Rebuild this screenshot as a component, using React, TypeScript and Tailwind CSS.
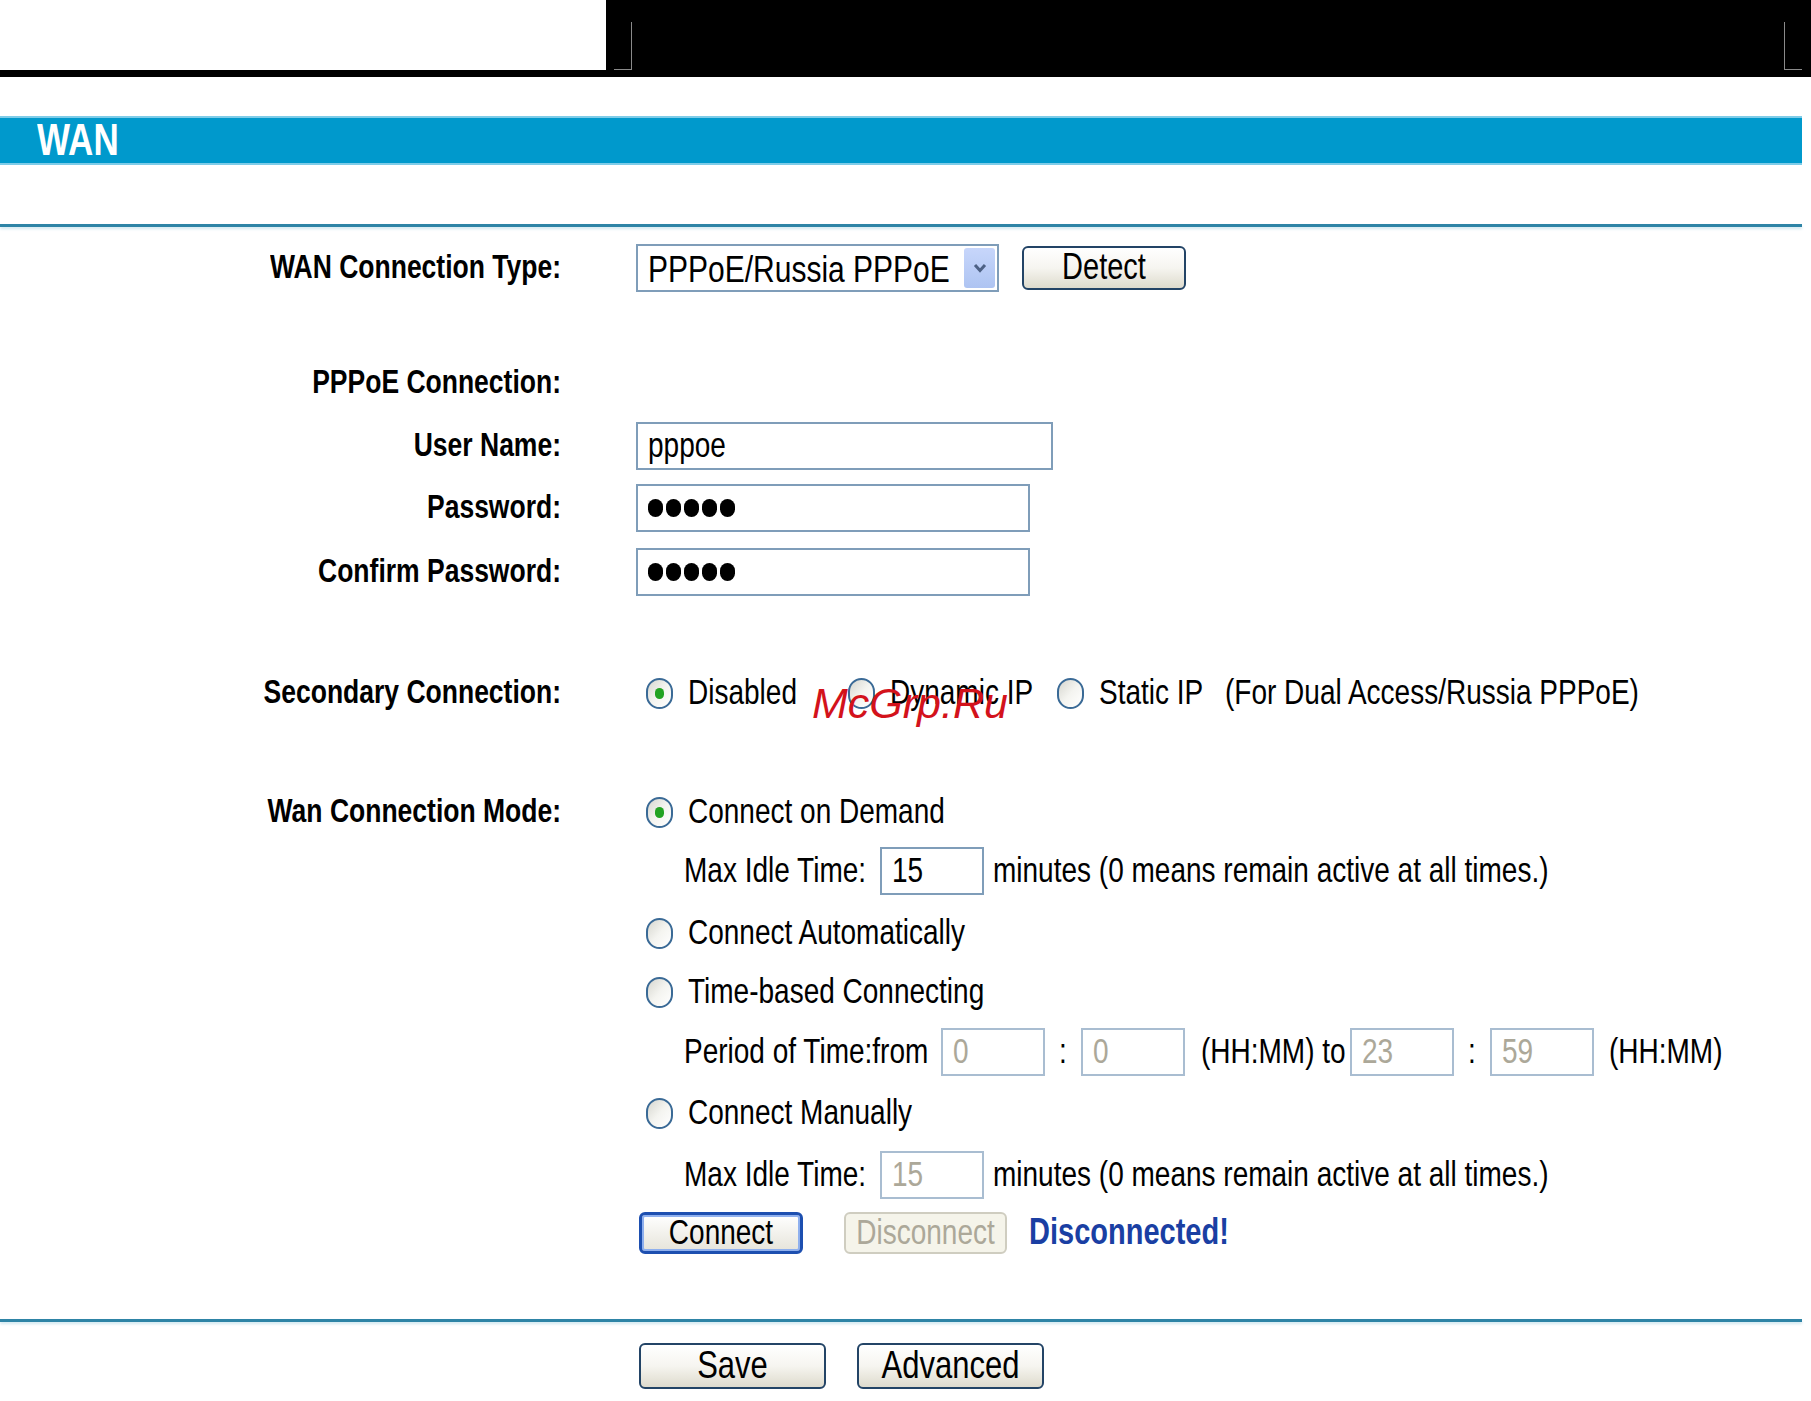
import React from "react";

const font = "font-['Liberation_Sans',Arial,sans-serif]";

function T({ children, className = "" }: { children: React.ReactNode; className?: string }) {
  return <span className={`inline-block scale-y-125 whitespace-nowrap ${className}`}>{children}</span>;
}

function Label({ children }: { children?: React.ReactNode }) {
  return (
    <div className="w-[561px] shrink-0 text-right text-[26.5px] font-bold text-black">
      {children ? <T>{children}</T> : null}
    </div>
  );
}

function Row({ label, className, children }: { label?: string; className: string; children?: React.ReactNode }) {
  return (
    <div className={`flex h-[48px] items-center ${className}`}>
      <Label>{label}</Label>
      <div className="ml-[75px] flex items-center text-[28px] text-black">{children}</div>
    </div>
  );
}

function Radio({ checked = false }: { checked?: boolean }) {
  return (
    <span className="flex h-[31px] w-[27px] shrink-0 items-center justify-center rounded-full border-2 border-[#3a6a96] bg-gradient-to-br from-[#d6d6cf] via-[#f4f4f0] to-white">
      {checked && <span className="h-[11px] w-[9px] rounded-full bg-[#22a322]" />}
    </span>
  );
}

function Field({ w, value, disabled = false }: { w: string; value?: string; disabled?: boolean }) {
  return (
    <div
      className={`flex h-[48px] ${w} shrink-0 items-center border-2 bg-white pl-[10px] ${
        disabled ? "border-[#a9bdd1] text-[#aca899]" : "border-[#7f9db9] text-black"
      }`}
    >
      {value && <T>{value}</T>}
    </div>
  );
}

function Dots() {
  return (
    <div className="flex h-[48px] w-[394px] items-center gap-[3px] border-2 border-[#7f9db9] bg-white pl-[10px]">
      {[0, 1, 2, 3, 4].map((i) => (
        <span key={i} className="h-[18px] w-[15px] rounded-full bg-black" />
      ))}
    </div>
  );
}

function Button({ children, className, variant = "normal" }: { children: React.ReactNode; className: string; variant?: "normal" | "focus" | "disabled" }) {
  const look =
    variant === "focus"
      ? "border-[3px] border-[#1d4fb0] bg-gradient-to-b from-white to-[#e6e4da] text-black shadow-[inset_0_0_0_2px_#8fb0ee]"
      : variant === "disabled"
      ? "border-2 border-[#cfcdc0] bg-[#f5f4ea] text-[#aca899]"
      : "border-2 border-[#234466] bg-gradient-to-b from-white via-[#f6f5f0] to-[#dedbcd] text-black";
  return (
    <div className={`flex shrink-0 items-center justify-center rounded-[6px] ${look} ${className}`}>
      <T>{children}</T>
    </div>
  );
}

function RadioText({ checked, children }: { checked?: boolean; children: React.ReactNode }) {
  return (
    <div className="ml-[10px] flex items-center gap-[15px]">
      <Radio checked={checked} />
      <T>{children}</T>
    </div>
  );
}

export default function App() {
  return (
    <div className={`relative min-h-[1401px] w-[1811px] bg-white ${font}`}>
      {/* top strip */}
      <div className="relative flex h-[77px] bg-black">
        <div className="h-[70px] w-[606px] bg-white" />
        <span className="absolute left-[631px] top-[22px] h-[48px] w-px bg-[#8a8a8a]" />
        <span className="absolute left-[614px] top-[69px] h-px w-[18px] bg-[#8a8a8a]" />
        <span className="absolute left-[1784px] top-[22px] h-[48px] w-px bg-[#8a8a8a]" />
        <span className="absolute left-[1784px] top-[69px] h-px w-[18px] bg-[#8a8a8a]" />
      </div>

      {/* title bar */}
      <div className="mt-[39px] flex h-[49px] w-[1802px] items-center border-y-2 border-[#7fcce8] bg-[#0099cc] pl-[37px]">
        <T className="text-[35px] font-bold text-white">WAN</T>
      </div>

      <div className="mt-[59px] h-[3px] w-[1802px] bg-[#2e84a6] shadow-[0_2px_3px_#cfe6ef]" />

      <Row label="WAN Connection Type:" className="mt-[17px]">
        <div className="flex h-[48px] w-[363px] items-center border-2 border-[#7f9db9] bg-white pl-[10px] pr-[2px]">
          <T className="text-[30px]">PPPoE/Russia PPPoE</T>
          <div className="ml-auto flex h-[40px] w-[31px] items-center justify-center rounded-[3px] bg-gradient-to-b from-[#c7d6fb] to-[#aec4f2]">
            <svg width="16" height="12" viewBox="0 0 16 12">
              <path d="M3 3 L8 8.5 L13 3" fill="none" stroke="#4d6185" strokeWidth="3" />
            </svg>
          </div>
        </div>
        <Button className="ml-[23px] h-[44px] w-[164px] text-[29px]">Detect</Button>
      </Row>

      <Row label="PPPoE Connection:" className="mt-[67px]" />

      <Row label="User Name:" className="mt-[15px]">
        <Field w="w-[417px]" value="pppoe" />
      </Row>
      <Row label="Password:" className="mt-[14px]">
        <Dots />
      </Row>
      <Row label="Confirm Password:" className="mt-[16px]">
        <Dots />
      </Row>

      <Row label="Secondary Connection:" className="mt-[73px]">
        <div className="w-[202px] shrink-0">
          <RadioText checked>Disabled</RadioText>
        </div>
        <div className="w-[219px] shrink-0">
          <RadioText>Dynamic IP</RadioText>
        </div>
        <div className="-ml-[10px] w-[178px] shrink-0">
          <RadioText>Static IP</RadioText>
        </div>
        <T>(For Dual Access/Russia PPPoE)</T>
      </Row>

      <Row label="Wan Connection Mode:" className="mt-[71px]">
        <RadioText checked>Connect on Demand</RadioText>
      </Row>
      <Row className="mt-[11px]">
        <div className="ml-[48px] w-[196px] shrink-0">
          <T>Max Idle Time:</T>
        </div>
        <Field w="w-[104px]" value="15" />
        <T className="ml-[9px]">minutes (0 means remain active at all times.)</T>
      </Row>
      <Row className="mt-[14px]">
        <RadioText>Connect Automatically</RadioText>
      </Row>
      <Row className="mt-[11px]">
        <RadioText>Time-based Connecting</RadioText>
      </Row>
      <Row className="mt-[12px]">
        <div className="ml-[48px] w-[257px] shrink-0">
          <T>Period of Time:from</T>
        </div>
        <Field w="w-[104px]" value="0" disabled />
        <div className="w-[36px] shrink-0 text-center">
          <T>:</T>
        </div>
        <Field w="w-[104px]" value="0" disabled />
        <div className="w-[165px] shrink-0 pl-[16px]">
          <T>(HH:MM) to</T>
        </div>
        <Field w="w-[104px]" value="23" disabled />
        <div className="w-[36px] shrink-0 text-center">
          <T>:</T>
        </div>
        <Field w="w-[104px]" value="59" disabled />
        <T className="ml-[15px]">(HH:MM)</T>
      </Row>
      <Row className="mt-[13px]">
        <RadioText>Connect Manually</RadioText>
      </Row>
      <Row className="mt-[14px]">
        <div className="ml-[48px] w-[196px] shrink-0">
          <T>Max Idle Time:</T>
        </div>
        <Field w="w-[104px]" value="15" disabled />
        <T className="ml-[9px]">minutes (0 means remain active at all times.)</T>
      </Row>
      <Row className="mt-[10px]">
        <Button variant="focus" className="ml-[3px] h-[42px] w-[164px] text-[28px]">
          Connect
        </Button>
        <Button variant="disabled" className="ml-[41px] h-[42px] w-[163px] text-[28px]">
          Disconnect
        </Button>
        <T className="ml-[22px] text-[29px] font-bold text-[#1a3fa3]">Disconnected!</T>
      </Row>

      <div className="mt-[62px] h-[3px] w-[1802px] bg-[#2e84a6] shadow-[0_2px_3px_#cfe6ef]" />

      <Row className="mt-[20px]">
        <Button className="ml-[3px] h-[46px] w-[187px] text-[31px]">Save</Button>
        <Button className="ml-[31px] h-[46px] w-[187px] text-[31px]">Advanced</Button>
      </Row>

      {/* watermark */}
      <div className="absolute left-[812px] top-[682px] text-[43px] italic leading-none text-[#d3121b]">McGrp.Ru</div>
    </div>
  );
}
